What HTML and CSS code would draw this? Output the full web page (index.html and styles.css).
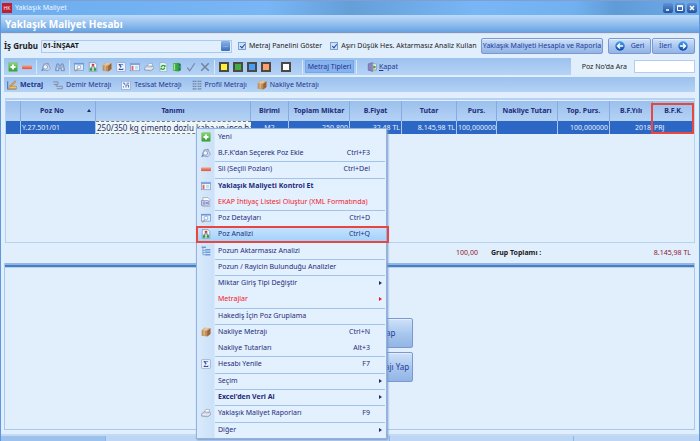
FILE: index.html
```html
<!DOCTYPE html>
<html lang="tr">
<head>
<meta charset="utf-8">
<title>Yaklaşık Maliyet</title>
<link rel="stylesheet" href="styles.css">
</head>
<body>
<svg class="sprite" aria-hidden="true">
  <defs>
    <linearGradient id="gGreen" x2="0" y2="1"><stop stop-color="#8fd86e"/><stop offset="1" stop-color="#2c9a35"/></linearGradient>
    <linearGradient id="gRed" x2="0" y2="1"><stop stop-color="#ffa184"/><stop offset="1" stop-color="#e2482c"/></linearGradient>
    <linearGradient id="gBlue" x2="0" y2="1"><stop stop-color="#4aa0ee"/><stop offset="1" stop-color="#0b46a6"/></linearGradient>
  </defs>
  <symbol id="add" viewBox="0 0 16 16"><rect x="1" y="1" width="14" height="14" rx="1" fill="url(#gGreen)" stroke="#7fbf7a"/><path d="M8 4v8M4 8h8" stroke="#fff" stroke-width="3"/></symbol>
  <symbol id="minus" viewBox="0 0 16 16"><rect x="0" y="6" width="16" height="5" rx="1" fill="url(#gRed)" stroke="#e58a78" stroke-width=".6"/></symbol>
  <symbol id="pick" viewBox="0 0 16 16"><path d="M2 10 5 3l6-1 4 8-4 4-7-1z" fill="#c9d9ef" stroke="#7289b0"/><circle cx="7" cy="8" r="3.5" fill="#eef5ff" stroke="#6482b4"/><path d="M4 11 1 14" stroke="#6482b4" stroke-width="2"/><circle cx="11" cy="3" r="1.3" fill="#d08080"/></symbol>
  <symbol id="bino" viewBox="0 0 16 16"><path d="M3 3h3l1 3h2l1-3h3l2 8v3h-5v-4H6v4H1v-3z" fill="#9fb4d6" stroke="#5f7db0"/><path d="M3 11h2M11 11h2" stroke="#eaf2ff" stroke-width="2"/></symbol>
  <symbol id="detail" viewBox="0 0 16 16"><rect x="1" y="2" width="14" height="11" fill="#e8f2ff" stroke="#5c82c0"/><path d="M1 3h14" stroke="#5c8fd8" stroke-width="2"/><circle cx="8" cy="8" r="3" fill="#fff" stroke="#6d8ab8"/><path d="m6 11-4 4" stroke="#c09060" stroke-width="2"/></symbol>
  <symbol id="analysis" viewBox="0 0 16 16"><path d="M2 1h9l3 3v11H2z" fill="#f4f8ff" stroke="#6c80a8"/><path d="M8 5v3M5 11V8h6v3" fill="none" stroke="#444"/><rect x="6" y="3" width="4" height="3" fill="#d6392c"/><rect x="3" y="10" width="4" height="4" fill="#239a3c"/><rect x="9" y="10" width="4" height="4" fill="#239a3c"/></symbol>
  <symbol id="box" viewBox="0 0 16 16"><path d="m1 5 5-4 9 1v9l-5 4-9-1z" fill="#c0905c"/><path d="m1 5 5-4 9 1-5 4z" fill="#e3bd8c"/><path d="m10 6 5-4v9l-5 4z" fill="#966539"/><path d="m5 5.5 5-4M5 6v8" stroke="#f0d7b0" stroke-width="1.2"/></symbol>
  <symbol id="sum" viewBox="0 0 16 16"><rect x="1" y="1" width="14" height="14" rx="1" fill="#f0f6ff" stroke="#8499c4"/><text x="8" y="13" text-anchor="middle" class="sigma">Σ</text></symbol>
  <symbol id="check-list" viewBox="0 0 16 16"><rect x="1" y="2" width="14" height="12" fill="#f2f8ff" stroke="#6d8fc6"/><path d="M1 3.5h14" stroke="#5b94dd" stroke-width="2"/><path d="M4 6v7" stroke="#e4694a" stroke-width="3"/><path d="M8 7h5M8 9h5M8 11h5" stroke="#a9bcda"/></symbol>
  <symbol id="printer" viewBox="0 0 16 16"><path d="m5 7 3-5 6 1-2 5z" fill="#fff" stroke="#8c99b0"/><path d="m1 9 4-3 10 1v4l-4 3-10-1z" fill="#cdd5e2" stroke="#7f8ba3"/><path d="m2 10 9 1 4-3" fill="none" stroke="#fff"/></symbol>
  <symbol id="refresh" viewBox="0 0 16 16"><path d="M3 1h8l3 3v11H3z" fill="#edf7f0" stroke="#8aa6b8"/><path d="M5 8q3-5 6-1M11 9q-3 5-6 1" fill="none" stroke="#28a044" stroke-width="2"/><path d="M12 4v4H9M4 13V9h3" fill="#28a044"/></symbol>
  <symbol id="book" viewBox="0 0 16 16"><path d="m2 2 8-1v14l-8-1z" fill="#35ab3e"/><path d="m10 1 4 2v10l-4 2z" fill="#1b7b31"/><path d="M4 3v10" stroke="#a8e88c" stroke-width="2"/><path d="M11 8h4" stroke="#5b94dd" stroke-width="2"/></symbol>
  <symbol id="tick" viewBox="0 0 16 16"><path d="m2 9 4 5 8-12" fill="none" stroke="#788ba9" stroke-width="2"/></symbol>
  <symbol id="cross" viewBox="0 0 16 16"><path d="m2 2 12 12M14 2 2 14" stroke="#71839f" stroke-width="2.4"/></symbol>
  <symbol id="exit" viewBox="0 0 16 16"><path d="m2 3 7-2v14l-7-2z" fill="#8b83bf" stroke="#6660a0"/><rect x="9" y="3" width="6" height="10" fill="#e6f1e9" stroke="#7992b8"/><path d="m15 8-5-3v6z" fill="#3b9a52"/><path d="M10 12h4" stroke="#e2b64d" stroke-width="2"/></symbol>
  <symbol id="ruler" viewBox="0 0 16 16"><path d="M1 2v12h14" fill="none" stroke="#527fc2" stroke-width="2"/><path d="M1 14h14v-4H6z" fill="#f0c65c" stroke="#b6812f"/><path d="m4 9 9-8 1 2-8 8z" fill="#ef9d45" stroke="#8a6a45" stroke-width=".6"/></symbol>
  <symbol id="rebar" viewBox="0 0 16 16"><path d="M0 3h8v4H1M5 7v3h10v4H6" fill="none" stroke="#7f90ad" stroke-width="1.6"/></symbol>
  <symbol id="pipe" viewBox="0 0 16 16"><rect x="1" y="2" width="14" height="13" fill="#edf4ff" stroke="#8fa3c8"/><path d="M3 5h3v3M9 5h4M4 12v-2M8 12V8h4v4" fill="none" stroke="#5876ab" stroke-width="1.6"/></symbol>
  <symbol id="profile" viewBox="0 0 16 16"><path d="M1 2h6M1 6h6M1 10h6M1 14h6M9 2h6M9 6h6M9 10h6M9 14h6" stroke="#6f84aa" stroke-width="2"/><path d="M4 2v12M12 2v12" stroke="#a9bad6"/></symbol>
  <symbol id="xml" viewBox="0 0 16 16"><path d="M3 1h8l3 3v11H3z" fill="#fbfcff" stroke="#8590b8"/><rect x="1" y="6" width="11" height="7" fill="#d5dcf4" stroke="#6b76b0"/><circle cx="5" cy="9.500" r="1.700" fill="none" stroke="#5563aa"/><path d="m8 8 3 3m0-3-3 3" stroke="#5563aa"/></symbol>
  <symbol id="tree" viewBox="0 0 16 16"><path d="M3 3v11h5M3 7h5M3 10.500h5" fill="none" stroke="#5a87c8"/><path d="M1 2h7M7 6h8M7 10h8M7 14h8" stroke="#6b9bdb" stroke-width="2.400"/></symbol>
  <symbol id="back" viewBox="0 0 16 16"><circle cx="8" cy="8" r="7.500" fill="url(#gBlue)"/><path d="M13 8H5M8 4 4 8l4 4" fill="none" stroke="#fff" stroke-width="2.200"/></symbol>
  <symbol id="next" viewBox="0 0 16 16"><circle cx="8" cy="8" r="7.500" fill="url(#gBlue)"/><path d="M3 8h8M8 4l4 4-4 4" fill="none" stroke="#fff" stroke-width="2.200"/></symbol>
</svg>

<div class="window">
  <header class="titlebar">
    <span class="logo">HK</span><span class="title">Yaklaşık Maliyet</span>
    <div class="winbtns">
      <button aria-label="Simge durumuna küçült"><svg viewBox="0 0 8 8"><path d="M2 6h3" stroke="#fff" stroke-width="1.500"/></svg></button>
      <button aria-label="Ekranı kapla"><svg viewBox="0 0 8 8"><path d="M1.500 2h5v4.500h-5z" fill="none" stroke="#fff"/><path d="M1 2h6" stroke="#fff" stroke-width="1.500"/></svg></button>
      <button aria-label="Pencereyi kapat"><svg viewBox="0 0 8 8"><path d="m2 2 4 4M6 2 2 6" stroke="#fff" stroke-width="1.500"/></svg></button>
    </div>
  </header>
  <h1 class="banner">Yaklaşık Maliyet Hesabı</h1>

  <main class="content">
    <div class="form-row">
      <label class="group-label" for="grup">İş Grubu</label>
      <div class="lookup"><input id="grup" type="text" value="01-İNŞAAT"><button aria-label="Grup seç">···</button></div>
      <label class="check"><input type="checkbox" checked>Metraj Panelini Göster</label>
      <label class="check wide"><input type="checkbox" checked>Aşırı Düşük Hes. Aktarmasız Analiz Kullan</label>
      <div class="actions">
        <button class="btn calc">Yaklaşık Maliyeti Hesapla ve Raporla</button>
        <div class="nav">
          <button class="btn"><svg class="ic"><use href="#back"/></svg>Geri</button>
          <button class="btn">İleri<svg class="ic"><use href="#next"/></svg></button>
        </div>
      </div>
    </div>

    <div class="tools-row">
      <div class="toolbar">
        <button aria-label="Yeni"><svg class="ic"><use href="#add"/></svg></button>
        <button aria-label="Sil"><svg class="ic"><use href="#minus"/></svg></button>
        <i class="sep"></i>
        <button aria-label="Poz ekle"><svg class="ic"><use href="#pick"/></svg></button>
        <button aria-label="Bul"><svg class="ic"><use href="#bino"/></svg></button>
        <i class="sep"></i>
        <button aria-label="Poz detayları"><svg class="ic"><use href="#detail"/></svg></button>
        <button aria-label="Poz analizi"><svg class="ic"><use href="#analysis"/></svg></button>
        <button aria-label="Nakliye metrajı"><svg class="ic"><use href="#box"/></svg></button>
        <button aria-label="Hesabı yenile"><svg class="ic"><use href="#sum"/></svg></button>
        <button aria-label="Kontrol et"><svg class="ic"><use href="#check-list"/></svg></button>
        <button aria-label="Raporlar"><svg class="ic"><use href="#printer"/></svg></button>
        <button aria-label="Güncelle"><svg class="ic"><use href="#refresh"/></svg></button>
        <button aria-label="Kitap"><svg class="ic"><use href="#book"/></svg></button>
        <button aria-label="Onayla"><svg class="ic"><use href="#tick"/></svg></button>
        <button aria-label="Vazgeç"><svg class="ic"><use href="#cross"/></svg></button>
        <i class="sep"></i>
        <button aria-label="Sarı"><i class="swatch yellow"></i></button>
        <button aria-label="Yeşil"><i class="swatch green"></i></button>
        <button aria-label="Mavi"><i class="swatch blue"></i></button>
        <button aria-label="Turuncu"><i class="swatch orange"></i></button>
        <button aria-label="Beyaz" class="spaced"><i class="swatch white"></i></button>
        <i class="sep far"></i>
        <button class="types">Metraj Tipleri</button>
        <i class="sep"></i>
        <button class="close"><svg class="ic"><use href="#exit"/></svg><span><u>K</u>apat</span></button>
      </div>
      <label class="search-label" for="ara">Poz No'da Ara</label>
      <input class="search" id="ara" type="text">
    </div>

    <nav class="tabs">
      <button class="active"><svg class="ic"><use href="#ruler"/></svg>Metraj</button>
      <button><svg class="ic"><use href="#rebar"/></svg>Demir Metrajı</button>
      <button><svg class="ic"><use href="#pipe"/></svg>Tesisat Metrajı</button>
      <button><svg class="ic"><use href="#profile"/></svg>Profil Metrajı</button>
      <button><svg class="ic"><use href="#box"/></svg>Nakliye Metrajı</button>
    </nav>

    <section class="grid">
      <table>
        <colgroup><col class="c-ind"><col class="c-poz"><col><col class="c-unit"><col class="c-qty"><col class="c-price"><col class="c-total"><col class="c-purs"><col class="c-ship"><col class="c-tp"><col class="c-year"><col class="c-bfk"></colgroup>
        <thead><tr><th></th><th class="sorted">Poz No</th><th>Tanımı</th><th>Birimi</th><th>Toplam Miktar</th><th>B.Fiyat</th><th>Tutar</th><th>Purs.</th><th>Nakliye Tutarı</th><th>Top. Purs.</th><th>B.F.Yılı</th><th>B.F.K.</th></tr></thead>
        <tbody><tr><td></td><td>Y.27.501/01</td><td class="editing">250/350 kg çimento dozlu kaba ve ince har</td><td class="mid">M2</td><td class="num">250,800</td><td class="num">32,48 TL</td><td class="num">8.145,98 TL</td><td class="num">100,000000</td><td></td><td class="num">100,000000</td><td class="num">2018</td><td>PRJ</td></tr></tbody>
      </table>
      <div class="mark column-mark"></div>
    </section>

    <div class="totals"><span class="amount">100,00</span><b>Grup Toplamı :</b><span class="amount sum">8.145,98 TL</span></div>

    <section class="panel">
      <button class="btn big">Seçili Poz İçin Metraj Yap</button>
      <button class="btn big">Seçili Poz İçin Demir Metrajı Yap</button>
    </section>
  </main>
  <footer class="status"><span></span><span></span><span></span><span></span></footer>

  <div class="menu" role="menu">
    <button role="menuitem"><svg class="ic"><use href="#add"/></svg><span>Yeni</span></button>
    <button role="menuitem"><svg class="ic"><use href="#pick"/></svg><span>B.F.K'dan Seçerek Poz Ekle</span><kbd>Ctrl+F3</kbd></button>
    <hr>
    <button role="menuitem"><svg class="ic"><use href="#minus"/></svg><span>Sil (Seçili Pozları)</span><kbd>Ctrl+Del</kbd></button>
    <hr>
    <button role="menuitem" class="strong"><svg class="ic"><use href="#check-list"/></svg><span>Yaklaşık Maliyeti Kontrol Et</span></button>
    <button role="menuitem" class="red"><svg class="ic"><use href="#xml"/></svg><span>EKAP İhtiyaç Listesi Oluştur (XML Formatında)</span></button>
    <hr>
    <button role="menuitem"><svg class="ic"><use href="#detail"/></svg><span>Poz Detayları</span><kbd>Ctrl+D</kbd></button>
    <button role="menuitem" class="hot"><svg class="ic"><use href="#analysis"/></svg><span>Poz Analizi</span><kbd>Ctrl+Q</kbd></button>
    <button role="menuitem"><svg class="ic"><use href="#tree"/></svg><span>Pozun Aktarmasız Analizi</span></button>
    <hr>
    <button role="menuitem"><i class="ic"></i><span>Pozun / Rayicin Bulunduğu Analizler</span></button>
    <hr>
    <button role="menuitem" class="sub"><i class="ic"></i><span>Miktar Giriş Tipi Değiştir</span></button>
    <button role="menuitem" class="sub red"><i class="ic"></i><span>Metrajlar</span></button>
    <hr>
    <button role="menuitem"><i class="ic"></i><span>Hakediş İçin Poz Gruplama</span></button>
    <hr>
    <button role="menuitem"><svg class="ic"><use href="#box"/></svg><span>Nakliye Metrajı</span><kbd>Ctrl+N</kbd></button>
    <button role="menuitem"><i class="ic"></i><span>Nakliye Tutarları</span><kbd>Alt+3</kbd></button>
    <hr>
    <button role="menuitem"><svg class="ic"><use href="#sum"/></svg><span>Hesabı Yenile</span><kbd>F7</kbd></button>
    <hr>
    <button role="menuitem" class="sub"><i class="ic"></i><span>Seçim</span></button>
    <hr>
    <button role="menuitem" class="sub strong"><i class="ic"></i><span>Excel'den Veri Al</span></button>
    <hr>
    <button role="menuitem"><svg class="ic"><use href="#printer"/></svg><span>Yaklaşık Maliyet Raporları</span><kbd>F9</kbd></button>
    <hr>
    <button role="menuitem" class="sub"><i class="ic"></i><span>Diğer</span></button>
  </div>
</div>
</body>
</html>
```
FILE: styles.css
```css
* { box-sizing: border-box; }
body {
  margin: 0;
  font: 7px/10px "Noto Sans", "Open Sans", sans-serif;
  color: #1e2c7a;
  background: #e1effd;
}
button, input, kbd { font: inherit; color: inherit; margin: 0; }
button { background: none; border: 0; padding: 0; white-space: nowrap; }
input { min-width: 0; padding: 0; border: 0; }
svg { display: block; }
.sprite { position: absolute; width: 0; height: 0; }
.ic { flex: none; width: 10px; height: 10px; }
.sigma { font: bold 13px "Liberation Serif", serif; fill: #2f4f9c; }

.window {
  position: relative;
  display: flex;
  flex-direction: column;
  min-height: 100vh;
  overflow: hidden;
  border-left: 1px solid #5c98de;
  border-right: 1px solid #5c98de;
  background: #e1effd;
}

.titlebar {
  display: flex;
  align-items: center;
  height: 15px;
  padding: 0 2px 0 1px;
  border-top: 1px solid #7f9ed2;
  background: linear-gradient(90deg, #6dadee 0, #78b6f5 38%, #659fd8 50%, #78b6f5 68%, #72b1f0 82%, #5f9bd6 88%, #6dabea 100%);
  color: #f0f6ff;
}
.logo {
  width: 10px;
  height: 10px;
  margin-right: 3px;
  background: #c01f30;
  font-size: 5px;
  text-align: center;
}
.winbtns { display: flex; gap: 2px; margin-left: auto; }
.winbtns button {
  width: 10px;
  height: 10px;
  padding: 1px;
  border-radius: 2px;
  background: linear-gradient(#5f93d9, #24529f);
}

.banner {
  height: 18px;
  margin: 0;
  padding-left: 4px;
  background: linear-gradient(#bedbf8, #92bfee 50%, #619fe0);
  color: #fff;
  font-size: 10px;
  line-height: 18px;
}

.content {
  flex: 1;
  display: flex;
  flex-direction: column;
  padding: 4px 4px 4px 3px;
  border-top: 1px solid #f3d8d8;
}

.form-row { display: flex; align-items: center; height: 16px; color: #1b1b1b; white-space: nowrap; }
.group-label { flex: none; width: 37px; font-size: 8px; font-weight: bold; }
.lookup {
  flex: none;
  display: flex;
  align-items: center;
  width: 191px;
  height: 13px;
  padding: 0 1px;
  border: 1px solid #a9c9f0;
}
.lookup input { flex: 1; background: none; font-weight: bold; }
.lookup button {
  width: 9px;
  height: 10px;
  border-radius: 1px;
  background: linear-gradient(#8db5e8, #3b6fbd);
  color: #fff;
  font-size: 6px;
  line-height: 10px;
}
.check { display: flex; align-items: center; gap: 3px; margin-left: 6px; }
.check.wide { margin-left: 8px; }
.check input {
  appearance: none;
  width: 8px;
  height: 8px;
  border: 1px solid #7aa0d8;
  background: #cfe2f9;
  position: relative;
}
.check input:checked::after {
  content: "";
  position: absolute;
  left: 2px;
  top: 0;
  width: 2px;
  height: 4px;
  border: solid #274b96;
  border-width: 0 1px 1px 0;
  transform: rotate(40deg);
}
.actions { display: flex; gap: 5px; margin-left: auto; }
.nav { display: flex; gap: 1px; }
.btn {
  display: flex;
  align-items: center;
  justify-content: center;
  height: 16px;
  border: 1px solid #7d97d3;
  border-radius: 2px;
  background: linear-gradient(#cfe2f8, #a7c6ee 55%, #93b5e5);
  box-shadow: inset 0 1px #e2eefb;
  color: #26399a;
}
.btn.calc { width: 122px; }
.nav .btn { width: 43px; gap: 6px; }

.tools-row { display: flex; align-items: center; gap: 7px; margin-top: 4px; height: 17px; color: #1b1b1b; }
.toolbar {
  flex: 1;
  display: flex;
  align-items: center;
  height: 17px;
  padding-left: 2px;
  background: linear-gradient(#9cc2ee, #a9caf2 50%, #b5d3f5);
  color: #1f3590;
}
.toolbar button { display: flex; align-items: center; justify-content: center; width: 14px; height: 13px; }
.sep { width: 1px; height: 14px; margin: 0 2px; background: #d7e8fb; }
.sep.far { margin-left: 9px; }
.swatch { width: 10px; height: 10px; border: 2px solid #4a4a42; }
.yellow { background: #ffef3a; }
.green { background: #43ab45; }
.blue { background: #479ef8; }
.orange { background: #ffa06c; }
.white { background: #fff; }
.toolbar .spaced { margin-left: 6px; }
.toolbar .types { width: 49px; border: 1px solid #78a6e4; background: #86b3ee; }
.toolbar .close { width: auto; gap: 2px; margin-left: 8px; }
.search-label { margin-left: 4px; white-space: nowrap; }
.search { width: 61px; height: 13px; border: 1px solid #b3cdf2; background: #fff; }

.tabs {
  display: flex;
  align-items: center;
  gap: 10px;
  height: 15px;
  margin-top: 2px;
  padding-left: 3px;
  background: linear-gradient(#9bc1ed, #b4d2f5);
  color: #1f3590;
}
.tabs button { display: flex; align-items: center; gap: 3px; }
.tabs .active { font-weight: bold; }

.grid {
  position: relative;
  height: 145px;
  margin: 6px 0 0 1px;
  padding-top: 1px;
  border: 1px solid #b7d1f2;
  border-top-width: 2px;
}
table { width: 100%; table-layout: fixed; border-collapse: separate; border-spacing: 0; }
th, td { padding: 0; overflow: hidden; white-space: nowrap; }
th {
  height: 20px;
  border-right: 1px solid #86abe2;
  background: linear-gradient(#9ac0ed, #b5d2f4);
}
td {
  height: 13px;
  padding: 0 1px;
  border-right: 1px solid #a9c8f0;
  background: #2c67c5;
  color: #e9f1fd;
}
th:last-child, td:last-child { border-right: 0; }
.sorted { position: relative; padding-right: 12px; }
.sorted::after {
  content: "";
  position: absolute;
  top: 8px;
  right: 4px;
  border: 2px solid transparent;
  border-top: 0;
  border-bottom: 3px solid #1e2c7a;
}
.num { text-align: right; }
.mid { text-align: center; }
td.editing { border: 1px dashed #777; border-width: 1px 0; background: #eef7f7; color: #1e2c6a; font-size: 8px; }
.c-ind { width: 15px; } .c-poz { width: 75px; } .c-unit { width: 38px; } .c-qty { width: 61px; }
.c-price { width: 52px; } .c-total { width: 55px; } .c-purs { width: 40px; } .c-ship { width: 61px; }
.c-tp { width: 52px; } .c-year { width: 43px; } .c-bfk { width: 41px; }
.mark { position: absolute; border: 2px solid #e8473f; }
.column-mark { top: 3px; right: 0; width: 43px; height: 31px; }

.totals { display: flex; align-items: center; height: 20px; padding-right: 4px; color: #1b1b1b; }
.totals .amount { width: 474px; text-align: right; color: #8c1730; }
.totals b { margin-left: 13px; }
.totals .sum { flex: 1; width: auto; }

.panel {
  flex: 1;
  display: flex;
  flex-direction: column;
  align-items: center;
  justify-content: center;
  gap: 4px;
  padding-top: 8px;
  border: 1px solid #a9c8f0;
  border-top: 0;
  background: linear-gradient(#8fb8e6 2px, #4a7cc0 2px, #4a7cc0 4px, #b5d0f1 4px, #b5d0f1 5px, transparent 5px);
}
.btn.big { width: 127px; height: 30px; font-size: 8px; }

.status { display: flex; gap: 1px; height: 7px; border-top: 2px solid #c3daf5; background: #8fb6e8; }
.status span { background: #bdd6f3; }
.status span:nth-child(1) { width: 104px; background: #9dc1ed; }
.status span:nth-child(2) { flex: 1; }
.status span:nth-child(3) { width: 183px; }
.status span:nth-child(4) { width: 125px; }

.menu {
  position: absolute;
  left: 195px;
  top: 128px;
  bottom: 2px;
  width: 191px;
  display: flex;
  flex-direction: column;
  justify-content: space-between;
  border: 1px solid #8fb2e3;
  background: linear-gradient(90deg, #d9eafb, #cbe1f8 17px, #e3f0fe 18px);
  box-shadow: 1px 1px 2px #7898c4;
}
.menu button {
  position: relative;
  display: flex;
  align-items: center;
  height: 16px;
  padding: 0 16px 0 4px;
  text-align: left;
}
.menu span { flex: 1; padding-left: 7px; }
.menu hr { width: 170px; height: 1px; margin: 0 0 -1px 18px; border: 0; background: #a3c3ef; }
.menu .strong { font-weight: bold; }
.menu .red { color: #f2182b; }
.menu .hot { background: linear-gradient(#c9e5fe, #a0d0fb); }
.menu .hot::after { content: ""; position: absolute; inset: 0 -3px -1px -1px; border: 2px solid #e8473f; }
.menu .sub::after {
  content: "";
  position: absolute;
  right: 4px;
  border: 2px solid transparent;
  border-right: 0;
  border-left: 3px solid currentColor;
}
```
